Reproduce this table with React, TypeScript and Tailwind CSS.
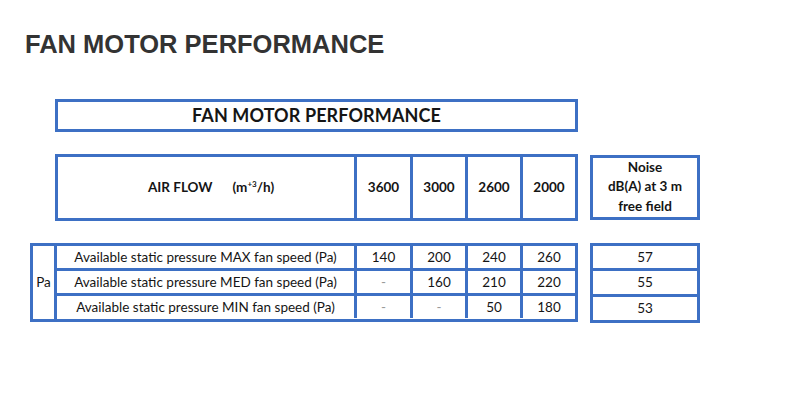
const border = "border-[#3d70c4]";

const rows = [
  { label: "Available static pressure MAX fan speed (Pa)", values: ["140", "200", "240", "260"], noise: "57" },
  { label: "Available static pressure MED fan speed (Pa)", values: ["-", "160", "210", "220"], noise: "55" },
  { label: "Available static pressure MIN fan speed (Pa)", values: ["-", "-", "50", "180"], noise: "53" },
];

const flows = ["3600", "3000", "2600", "2000"];
const numWidths = ["w-[56px]", "w-[55px]", "w-[55px]", "flex-1"];

export default function App() {
  return (
    <div className="w-[799px] h-[400px] bg-white font-['Lato',sans-serif] text-[#151515]">
      <h1 className="pl-[25px] pt-[32px] font-['Liberation_Sans',Arial,sans-serif] text-[25.5px] leading-none font-bold text-[#333333]">
        FAN MOTOR PERFORMANCE
      </h1>

      {/* title box */}
      <div className={`ml-[55px] mt-[41px] w-[523px] h-[33px] border-[3px] ${border} flex items-center justify-center`}>
        <span className="text-[18px] font-bold tracking-[0.1px]">FAN MOTOR PERFORMANCE</span>
      </div>

      {/* header */}
      <div className="mt-[22px] flex gap-[12px] items-center">
        <div className={`ml-[55px] w-[523px] h-[67px] border-[3px] ${border} flex`}>
          <div className="w-[296px] flex items-center justify-center text-[13.5px] font-bold">
            <span className="ml-[10px]">AIR FLOW</span>
            <span className="ml-[20px]">
              (m<sup className="text-[8px] -top-[0.6em]">+3</sup>/h)
            </span>
          </div>
          {flows.map((f, i) => (
            <div key={f} className={`${numWidths[i]} border-l-[3px] ${border} flex items-center justify-center text-[13.5px] font-bold`}>
              {f}
            </div>
          ))}
        </div>
        <div className={`w-[110px] h-[65px] border-[3px] ${border} flex flex-col items-center justify-center text-[13.5px] font-bold leading-[19.5px]`}>
          <span>Noise</span>
          <span>dB(A) at 3 m</span>
          <span>free field</span>
        </div>
      </div>

      {/* data */}
      <div className="mt-[22px] flex gap-[12px]">
        <div className={`ml-[30px] w-[548px] h-[79px] border-[3px] ${border} flex`}>
          <div className={`w-[24px] border-r-[3px] ${border} flex items-center justify-center text-[13.5px]`}>Pa</div>
          <div className="flex-1 flex flex-col">
            {rows.map((r, ri) => (
              <div key={r.label} className={`flex-1 flex ${ri > 0 ? `border-t-[3px] ${border}` : ""}`}>
                <div className="w-[297px] flex items-center justify-center text-[13.5px]">{r.label}</div>
                {r.values.map((v, i) => (
                  <div
                    key={i}
                    className={`${numWidths[i]} border-l-[3px] ${border} flex items-center justify-center text-[13.5px] ${v === "-" ? "text-[#9a9a9a]" : ""}`}
                  >
                    {v}
                  </div>
                ))}
              </div>
            ))}
          </div>
        </div>
        <div className={`w-[110px] h-[80px] border-[3px] ${border} flex flex-col`}>
          {rows.map((r, ri) => (
            <div key={r.noise} className={`flex-1 flex items-center justify-center text-[13.5px] ${ri > 0 ? `border-t-[3px] ${border}` : ""}`}>
              {r.noise}
            </div>
          ))}
        </div>
      </div>
    </div>
  );
}
